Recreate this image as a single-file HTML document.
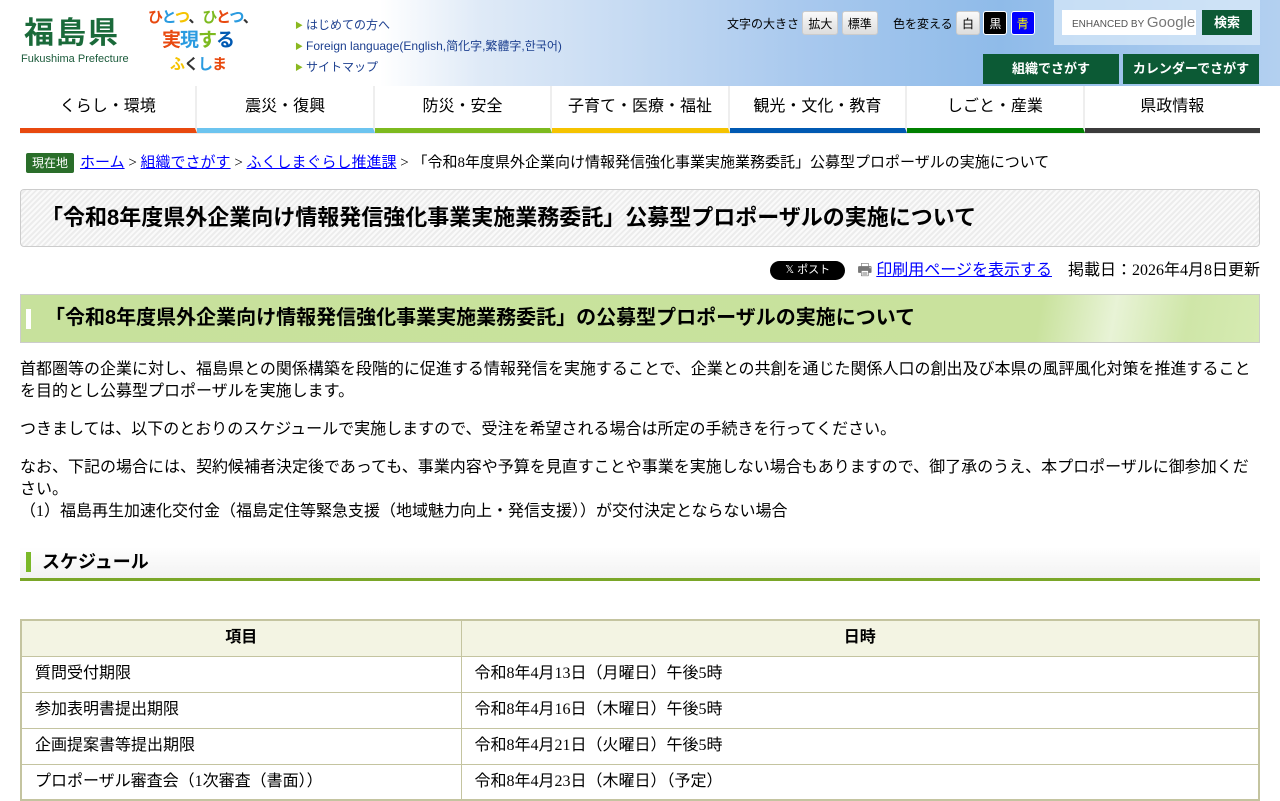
<!DOCTYPE html>
<html><head><meta charset="utf-8">
<style>
*{box-sizing:border-box;margin:0;padding:0}
body{width:1280px;height:800px;overflow:hidden;font-family:"Liberation Serif","Noto Sans CJK JP",serif;font-size:16px;color:#000;background:#fff;line-height:22px}
#hd{position:relative;height:86px;font-family:"Liberation Sans","Noto Sans CJK JP",sans-serif;background:linear-gradient(90deg,#fff 0,#fff 380px,#dfeaf7 480px,#a9c9ee 800px,#8fbbe9 1000px,#b3d0f0 1280px)}
.logo{position:absolute;left:24px;top:16px;font-size:30px;font-weight:bold;color:#1a6a3a;letter-spacing:2px;line-height:36px}
.logo small{display:block;font-size:11px;font-weight:normal;color:#1a5a3a;letter-spacing:0;line-height:14px;margin-left:-3px}
.cat{position:absolute;left:148px;top:6px;width:100px;height:72px;font-size:15px;font-weight:bold;line-height:23px;text-align:center;white-space:nowrap;letter-spacing:-1px}
.cat .b{font-size:19px}
.hl{position:absolute;left:295px;top:15px;font-size:12px;color:#1c3f8f;line-height:20px}
.hl div:before{content:"▶";color:#8ab820;font-size:8px;margin-right:3px;vertical-align:1px}
.tools{position:absolute;top:11px;font-size:12px;line-height:24px}
.btn{display:inline-block;height:24px;padding:0 5px;border-radius:3px;background:linear-gradient(#fafafa,#ddd);border:1px solid #ccc;font-size:12px}
.srch{position:absolute;left:1054px;top:0;width:206px;height:45px;background:rgba(220,235,250,.7)}
.srch .in{position:absolute;left:8px;top:10px;width:134px;height:25px;background:#fff;font-size:10px;color:#555;padding-left:10px;line-height:25px;white-space:nowrap;overflow:hidden}
.srch .in b{font-size:15px;font-weight:normal;color:#777}
.gb{position:absolute;background:#0c5a35;color:#fff;font-weight:bold;font-size:13px;text-align:center;line-height:30px}
#nav{display:flex;margin:0 20px;height:48px;border-bottom:1px solid #eee;font-family:"Liberation Sans","Noto Sans CJK JP",sans-serif}
#nav div{flex:1;text-align:center;font-size:16px;line-height:42px;border-right:2px solid #eee;border-bottom:5px solid}
#main{padding:0 20px}
.bc{margin-top:18px;font-size:15px;line-height:22px;padding-left:6px}
.bc .cur{display:inline-block;background:#2a6e2a;color:#fff;font-size:12px;padding:0 6px;line-height:20px;border-radius:2px;margin-right:6px;font-family:"Liberation Sans","Noto Sans CJK JP",sans-serif}
a{color:#00f;text-decoration:underline}
h1,h2,h3,th{font-family:"Liberation Sans","Noto Sans CJK JP",sans-serif}
h1{margin-top:15px;height:58px;border:1px solid #ccc;border-radius:4px;background:repeating-linear-gradient(135deg,#fafafa 0 2px,#ececec 2px 4px);font-size:22px;line-height:56px;padding-left:20px}
.sh{text-align:right;margin-top:12px;line-height:24px}
.xb{display:inline-block;background:#000;color:#fff;font-size:11px;border-radius:10px;padding:0 15px;line-height:19px;vertical-align:2px;margin-right:12px;font-family:"Liberation Sans","Noto Sans CJK JP",sans-serif}
h2{margin-top:11px;height:49px;background:linear-gradient(100deg,#c7e19c 0,#c9e29d 82%,#e8f3d6 88%,#cfe6a8 94%,#d6ebb2 100%);border:1px solid #ccc;font-size:20px;line-height:47px;padding-left:24px;position:relative}
h2:before{content:"";position:absolute;left:5px;top:14px;width:5px;height:20px;background:#fff}
p{margin-top:16px;line-height:22px}
h3{margin-top:24px;height:34px;font-size:18px;line-height:30px;padding-left:22px;position:relative;background:linear-gradient(#fff,#f2f2f2);border-bottom:3px solid #7aa628}
h3:before{content:"";position:absolute;left:6px;top:5px;width:5px;height:20px;background:#7ab828}
table{margin-top:40px;width:1240px;border-collapse:collapse;border:2px solid #c4c4a0}
td,th{border:1px solid #c4c4a0;height:36px;padding:0 13px}
th{background:#f3f4e3;text-align:center;font-size:16px}
</style></head><body>
<div id="hd">
<div class="logo">福島県<small>Fukushima Prefecture</small></div>
<div class="cat"><span style="color:#e8490f">ひ</span><span style="color:#2a9be0">と</span><span style="color:#f5c300">つ</span><span style="color:#333">、</span><span style="color:#7dba1f">ひ</span><span style="color:#e8490f">と</span><span style="color:#2a9be0">つ</span><span style="color:#333">、</span><br><span class="b"><span style="color:#e8490f">実</span><span style="color:#2a9be0">現</span><span style="color:#7dba1f">す</span><span style="color:#0059b2">る</span></span><br><span style="color:#f5c300">ふ</span><span style="color:#333">く</span><span style="color:#2a9be0">し</span><span style="color:#e8490f">ま</span></div>
<div class="hl"><div>はじめての方へ</div><div>Foreign language(English,简化字,繁體字,한국어)</div><div>サイトマップ</div></div>
<div class="tools" style="left:727px">文字の大きさ <span class="btn">拡大</span> <span class="btn">標準</span></div>
<div class="tools" style="left:893px">色を変える <span class="btn">白</span> <span class="btn" style="background:#000;color:#fff;border-color:#fff">黒</span> <span class="btn" style="background:#00f;color:#ff0;border-color:#fff">青</span></div>
<div class="srch"><div class="in">ENHANCED BY <b>Google</b></div><div class="gb" style="left:148px;top:10px;width:50px;height:25px;line-height:25px">検索</div></div>
<div class="gb" style="left:983px;top:54px;width:136px;height:30px">組織でさがす</div>
<div class="gb" style="left:1123px;top:54px;width:136px;height:30px">カレンダーでさがす</div>
</div>
<div id="nav">
<div style="border-bottom-color:#e8490f">くらし・環境</div>
<div style="border-bottom-color:#6cc4ef">震災・復興</div>
<div style="border-bottom-color:#7dba1f">防災・安全</div>
<div style="border-bottom-color:#f5c300">子育て・医療・福祉</div>
<div style="border-bottom-color:#0059b2">観光・文化・教育</div>
<div style="border-bottom-color:#008000">しごと・産業</div>
<div style="border-bottom-color:#3b3b3b;border-right:0">県政情報</div>
</div>
<div id="main">
<div class="bc"><span class="cur">現在地</span><a>ホーム</a> &gt; <a>組織でさがす</a> &gt; <a>ふくしまぐらし推進課</a> &gt; 「令和8年度県外企業向け情報発信強化事業実施業務委託」公募型プロポーザルの実施について</div>
<h1>「令和8年度県外企業向け情報発信強化事業実施業務委託」公募型プロポーザルの実施について</h1>
<div class="sh"><span class="xb">𝕏 ポスト</span><span style="color:#777">🖶</span> <a>印刷用ページを表示する</a>　掲載日：2026年4月8日更新</div>
<h2>「令和8年度県外企業向け情報発信強化事業実施業務委託」の公募型プロポーザルの実施について</h2>
<p style="margin-top:16px">首都圏等の企業に対し、福島県との関係構築を段階的に促進する情報発信を実施することで、企業との共創を通じた関係人口の創出及び本県の風評風化対策を推進することを目的とし公募型プロポーザルを実施します。</p>
<p>つきましては、以下のとおりのスケジュールで実施しますので、受注を希望される場合は所定の手続きを行ってください。</p>
<p>なお、下記の場合には、契約候補者決定後であっても、事業内容や予算を見直すことや事業を実施しない場合もありますので、御了承のうえ、本プロポーザルに御参加ください。<br>（1）福島再生加速化交付金（福島定住等緊急支援（地域魅力向上・発信支援））が交付決定とならない場合</p>
<h3>スケジュール</h3>
<table style="margin-top:38px">
<tr><th style="width:440px">項目</th><th>日時</th></tr>
<tr><td>質問受付期限</td><td>令和8年4月13日（月曜日）午後5時</td></tr>
<tr><td>参加表明書提出期限</td><td>令和8年4月16日（木曜日）午後5時</td></tr>
<tr><td>企画提案書等提出期限</td><td>令和8年4月21日（火曜日）午後5時</td></tr>
<tr><td>プロポーザル審査会（1次審査（書面））</td><td>令和8年4月23日（木曜日）（予定）</td></tr>
</table>
</div>
</body></html>
